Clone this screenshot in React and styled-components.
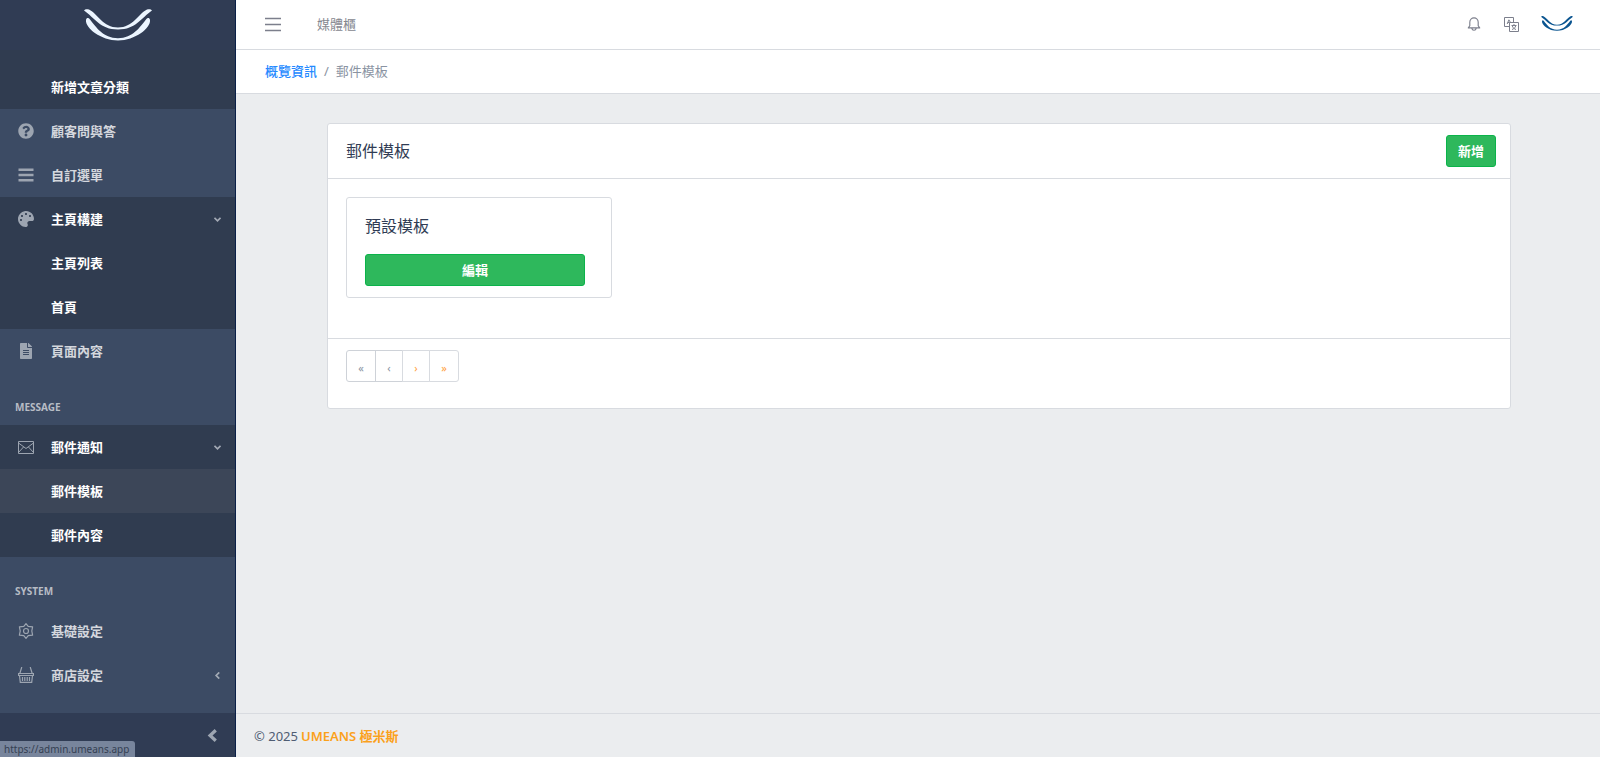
import React from 'react';
import styled, { createGlobalStyle, css } from 'styled-components';
import { FaQuestionCircle, FaPalette, FaFileAlt } from 'react-icons/fa';

const GlobalStyle = createGlobalStyle`
  *, *::before, *::after {
    box-sizing: border-box;
  }

  body {
    margin: 0;
    background: #ebedef;
    color: #4f5d73;
    font-family: "Noto Sans", "Noto Sans CJK TC", sans-serif;
    font-size: 13px;
    line-height: 20px;
  }

  a {
    text-decoration: none;
  }

  button {
    font: inherit;
    cursor: pointer;
  }
`;

const Page = styled.div`
  display: flex;
  height: 100vh;
`;

const Sidebar = styled.aside`
  position: relative;
  display: flex;
  flex-direction: column;
  flex: 0 0 236px;
  background: #3c4b64;
  border-right: 1px solid #0a2048;
`;

const Brand = styled.a`
  display: flex;
  flex: 0 0 50px;
  align-items: center;
  justify-content: center;
  background: #303c54;
  color: #ebf5ff;
`;

const Nav = styled.nav`
  flex: 1;
  min-height: 0;
  overflow: hidden;
`;

const NavGroup = styled.div`
  background: #303c50;
  padding-top: ${props => props.$scrolled ? '15px' : '0'};
`;

const NavTitle = styled.h2`
  margin: 0;
  padding: 24px 15px 8px;
  color: #b7bcc5;
  font-size: 10px;
  font-weight: 700;
`;

const NavLink = styled.a`
  display: flex;
  align-items: center;
  height: 44px;
  padding-right: 14px;
  color: ${props => props.$bright ? '#fff' : '#d4d7dd'};
  background: ${props => props.$current ? '#3c4658' : 'transparent'};
  font-weight: 700;
`;

const NavIcon = styled.span`
  display: flex;
  flex: 0 0 51px;
  justify-content: center;
  color: #9da5b1;

  svg {
    width: 16px;
    height: 16px;
  }
`;

const NavText = styled.span`
  flex: 1;
`;

const NavToggle = styled.span`
  display: flex;
  color: #a3aab5;
`;

const Minimizer = styled.button`
  display: flex;
  flex: 0 0 44px;
  align-items: center;
  justify-content: flex-end;
  padding: 0 16px;
  border: 0;
  background: #303c54;
  color: #9da5b1;
`;

const StatusBar = styled.div`
  position: absolute;
  left: 0;
  bottom: 0;
  padding: 0 6px 0 4px;
  border-top-right-radius: 3px;
  background: #78859c;
  color: #343f52;
  font-size: 10px;
  line-height: 16px;
`;

const Main = styled.div`
  display: flex;
  flex: 1;
  flex-direction: column;
  min-width: 0;
`;

const Topbar = styled.header`
  display: flex;
  align-items: center;
  height: 50px;
  padding: 0 27px 2px 29px;
  border-bottom: 1px solid #d8dbe0;
  background: #fff;
`;

const IconButton = styled.button`
  display: flex;
  padding: 0;
  border: 0;
  background: none;
  color: #7c7f8c;
`;

const TopLink = styled.a`
  margin-left: 36px;
  color: #85878f;
`;

const Tools = styled.div`
  display: flex;
  align-items: center;
  gap: 22px;
  margin-left: auto;
`;

const Avatar = styled.span`
  display: flex;
  color: #0b5590;
`;

const Breadcrumb = styled.nav`
  display: flex;
  align-items: center;
  gap: 7px;
  height: 44px;
  padding: 0 29px 2px;
  border-bottom: 1px solid #d8dbe0;
  background: #fff;
  color: #8a93a2;

  a {
    color: #2489ff;
    font-weight: 500;
  }
`;

const Content = styled.main`
  flex: 1;
  padding: 29px 89px 29px 91px;
`;

const Card = styled.section`
  border: 1px solid #d8dbe0;
  border-radius: 3px;
  background: #fff;
`;

const CardHeader = styled.div`
  display: flex;
  align-items: center;
  justify-content: space-between;
  height: 55px;
  padding: 0 14px 0 18px;
  border-bottom: 1px solid #d8dbe0;
`;

const Title = styled.h1`
  margin: 0;
  color: #303c54;
  font-size: 16px;
  font-weight: 400;
  line-height: 20px;
`;

const CardBody = styled.div`
  display: grid;
  grid-template-columns: repeat(4, 1fr);
  gap: 27px;
  padding: 18px 18px 40px;
`;

const Template = styled.article`
  display: flex;
  flex-direction: column;
  gap: 18px;
  padding: 18px 26px 11px 18px;
  border: 1px solid #d8dbe0;
  border-radius: 3px;
`;

const Button = styled.button`
  height: 32px;
  padding: 0 11px;
  border: 1px solid #0bb34a;
  border-radius: 3px;
  background: #2eb85c;
  color: #fff;
  font-weight: 600;
`;

const CardFooter = styled.div`
  padding: 11px 18px 26px;
  border-top: 1px solid #d8dbe0;
`;

const Pagination = styled.div`
  display: flex;
`;

const PageButton = styled.button`
  width: ${props => props.$edge ? '30px' : '28px'};
  height: 32px;
  padding: 4px 0 0;
  border: 1px solid #d8dbe0;
  background: #fff;
  color: #ff9f43;
  font-size: 11px;

  & + & {
    margin-left: -1px;
  }

  &:first-child {
    border-radius: 3px 0 0 3px;
  }

  &:last-child {
    border-radius: 0 3px 3px 0;
  }

  ${props => props.disabled && css`
    border-color: #ced2d8;
    color: #8a93a2;
    cursor: default;
  `}
`;

const Footer = styled.footer`
  display: flex;
  align-items: center;
  gap: 3px;
  height: 44px;
  padding: 0 18px;
  border-top: 1px solid #d8dbe0;

  a {
    color: #fba11b;
    font-weight: 600;
  }
`;

const Logo = ({width, height}) => (
  <svg width={width} height={height} viewBox="0 0 68 32" fill="currentColor" aria-hidden="true">
    <path d="M0 1.500C1 0 3 0 5 .5C14 5 19 18.500 34 18.500S54 5 63 .5C65 0 67 0 68 1.500C57 9 52 20.500 34 20.500S11 9 0 1.500Z" />
    <path d="M2 11C2.500 8.500 4.500 8.500 6 10.500C12 18 19 29 34 29.300C49 29 56 18 62 10.500C63.500 8.500 65.500 8.500 66 11C67 19 51 31.500 34 31.500S1 19 2 11Z" />
  </svg>
);

const Stroke = ({size = 16, width = 1, children}) => (
  <svg
    width={size}
    height={size}
    viewBox="0 0 16 16"
    fill="none"
    stroke="currentColor"
    strokeWidth={width}
    aria-hidden="true"
  >
    {children}
  </svg>
);

const ListIcon = () => (
  <Stroke width={2.4}>
    <path d="M.5 2.800H15.500M.5 8H15.500M.5 13.200H15.500" />
  </Stroke>
);

const EnvelopeIcon = () => (
  <Stroke>
    <path d="M.5 2.500H15.500V14.500H.5ZM.5 4L8 9.500L15.500 4M.5 13.500L5.500 8M15.500 13.500L10.500 8" />
  </Stroke>
);

const SettingsIcon = () => (
  <Stroke width={1.2}>
    <path d="M8 .7L10.200 3.400L14.600 3.900L13.800 8L14.600 12.100L10.200 12.600L8 15.300L5.800 12.600L1.400 12.100L2.200 8L1.400 3.900L5.800 3.400Z" strokeLinejoin="round" />
    <circle cx="8" cy="8" r="2.500" />
  </Stroke>
);

const BasketIcon = () => (
  <Stroke width={1.2}>
    <path d="M.6 6.500H15.400V8.500H.6ZM1.500 8.500L2.300 15.400H13.700L14.500 8.500M1.800 6.500L3.800 0M14.200 6.500L12.200 0M4.500 10V14M6.800 10V14M9.200 10V14M11.500 10V14" />
  </Stroke>
);

const BellIcon = () => (
  <Stroke size={14} width={1.3}>
    <path d="M1.500 12.500H14.500L12.800 10V6C12.800 3 10.600 1 8 1S3.200 3 3.200 6V10ZM5.500 13C6 15.900 10 15.900 10.500 13" strokeLinejoin="round" />
  </Stroke>
);

const TranslateIcon = () => (
  <Stroke>
    <path d="M6.500 10.500H1.500V1.500H10.500V6.500M6.500 6.500H15.500V15.500H6.500ZM4.200 8L5.900 3.800L7.500 6.500M4.700 6.500H6.500M8.500 9.500H13.500M11 8V9.500M9.300 10C10 12 11.500 13 13 13.500M12.700 10C12 12 10.500 13 9 13.500" />
  </Stroke>
);

const MenuIcon = () => (
  <Stroke width={1.4}>
    <path d="M0 2.500H16M0 8.500H16M0 14.500H16" />
  </Stroke>
);

const Chevron = ({open}) => (
  <Stroke size={7} width={4}>
    {open ? <path d="M1 4L8 11L15 4" /> : <path d="M12 1L5 8L12 15" />}
  </Stroke>
);

const Item = ({icon, children, toggle, ...rest}) => (
  <NavLink href="#" {...rest}>
    <NavIcon>{icon}</NavIcon>
    <NavText>{children}</NavText>
    {toggle && <NavToggle><Chevron open={toggle === 'open'} /></NavToggle>}
  </NavLink>
);

const App = () => (
  <Page>
    <GlobalStyle />
    <Sidebar>
      <Brand href="#" aria-label="UMEANS">
        <Logo width={68} height={32} />
      </Brand>
      <Nav>
        <NavGroup $scrolled>
          <Item $bright>新增文章分類</Item>
        </NavGroup>
        <Item icon={<FaQuestionCircle />}>顧客問與答</Item>
        <Item icon={<ListIcon />}>自訂選單</Item>
        <NavGroup>
          <Item icon={<FaPalette />} toggle="open" $bright>主頁構建</Item>
          <Item $bright>主頁列表</Item>
          <Item $bright>首頁</Item>
        </NavGroup>
        <Item icon={<FaFileAlt />}>頁面內容</Item>
        <NavTitle>MESSAGE</NavTitle>
        <NavGroup>
          <Item icon={<EnvelopeIcon />} toggle="open" $bright>郵件通知</Item>
          <Item $bright $current>郵件模板</Item>
          <Item $bright>郵件內容</Item>
        </NavGroup>
        <NavTitle>SYSTEM</NavTitle>
        <Item icon={<SettingsIcon />}>基礎設定</Item>
        <Item icon={<BasketIcon />} toggle="closed">商店設定</Item>
      </Nav>
      <Minimizer aria-label="Minimize sidebar">
        <Stroke size={13} width={4}>
          <path d="M12 1.500L5 8L12 14.500" />
        </Stroke>
      </Minimizer>
      <StatusBar>https://admin.umeans.app</StatusBar>
    </Sidebar>
    <Main>
      <Topbar>
        <IconButton aria-label="Toggle sidebar"><MenuIcon /></IconButton>
        <TopLink href="#">媒體櫃</TopLink>
        <Tools>
          <IconButton aria-label="Notifications"><BellIcon /></IconButton>
          <IconButton aria-label="Language"><TranslateIcon /></IconButton>
          <IconButton aria-label="Account">
            <Avatar><Logo width={32} height={15} /></Avatar>
          </IconButton>
        </Tools>
      </Topbar>
      <Breadcrumb aria-label="Breadcrumb">
        <a href="#">概覽資訊</a>
        <span>/</span>
        <span>郵件模板</span>
      </Breadcrumb>
      <Content>
        <Card>
          <CardHeader>
            <Title>郵件模板</Title>
            <Button>新增</Button>
          </CardHeader>
          <CardBody>
            <Template>
              <Title as="h2">預設模板</Title>
              <Button>編輯</Button>
            </Template>
          </CardBody>
          <CardFooter>
            <Pagination>
              <PageButton $edge disabled aria-label="First page">«</PageButton>
              <PageButton disabled aria-label="Previous page">‹</PageButton>
              <PageButton aria-label="Next page">›</PageButton>
              <PageButton $edge aria-label="Last page">»</PageButton>
            </Pagination>
          </CardFooter>
        </Card>
      </Content>
      <Footer>
        <span>© 2025</span>
        <a href="#">UMEANS 極米斯</a>
      </Footer>
    </Main>
  </Page>
);

export default App;
